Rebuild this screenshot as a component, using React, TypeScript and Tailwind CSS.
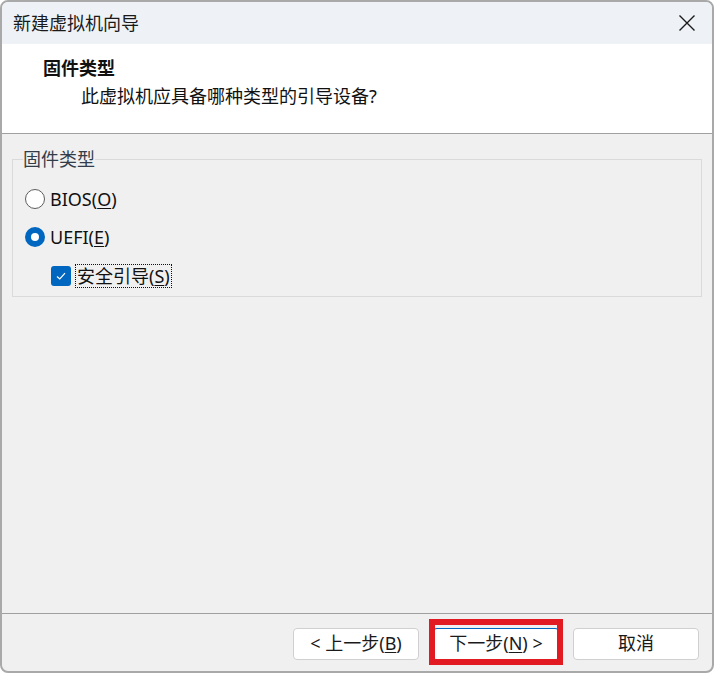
import React, { useState } from 'react';

const font = { fontFamily: '"Noto Sans", "Noto Sans CJK SC", sans-serif' };

const Radio = ({ checked, pre, hot, post, onClick }: { checked: boolean; pre: string; hot: string; post: string; onClick: () => void }) => (
  <button onClick={onClick} className="flex items-center gap-[5px] h-[24px] text-[18px] text-[#111]">
    {checked ? (
      <span className="w-[20px] h-[20px] rounded-full bg-[#0067c0] flex items-center justify-center">
        <span className="w-[8px] h-[8px] rounded-full bg-white" />
      </span>
    ) : (
      <span className="w-[20px] h-[20px] rounded-full border border-[#5d5d5d] bg-white" />
    )}
    <span>
      {pre}
      <span className="underline underline-offset-2">{hot}</span>
      {post}
    </span>
  </button>
);

const Btn = ({ children, def }: { children: React.ReactNode; def?: boolean }) => (
  <button
    className={`w-[126px] h-[32px] rounded-[4px] bg-white border text-[18px] text-[#1a1a1a] flex items-center justify-center ${
      def ? 'border-[#d0d0d0] border-t-[#0067c0]' : 'border-[#d0d0d0]'
    }`}
  >
    {children}
  </button>
);

export default function App() {
  const [fw, setFw] = useState<'bios' | 'uefi'>('uefi');
  const [secure, setSecure] = useState(true);

  return (
    <div className="w-[714px] h-[673px] bg-white" style={font}>
      <div className="w-full h-full rounded-[8px] border-2 border-[#a9a9a9] overflow-hidden flex flex-col bg-[#f0f0f0]">
        {/* title bar */}
        <div className="h-[42px] bg-[#eef2f6] flex items-center justify-between pl-[11px] pr-[14px]">
          <span className="text-[18px] text-[#1a1a1a]">新建虚拟机向导</span>
          <svg width="18" height="18" viewBox="0 0 18 18" className="mr-[2px]">
            <path d="M1.5 1.5 L16.5 16.5 M16.5 1.5 L1.5 16.5" stroke="#1a1a1a" strokeWidth="1.4" />
          </svg>
        </div>

        {/* header */}
        <div className="h-[90px] bg-white border-b border-[#a0a0a0] pl-[41px] pt-[11px]">
          <div className="text-[18px] font-bold text-[#111] leading-[26px]">固件类型</div>
          <div className="text-[18px] text-[#111] leading-[26px] pl-[38px] mt-[2px]">此虚拟机应具备哪种类型的引导设备?</div>
        </div>

        {/* body */}
        <div className="flex-1 px-[10px] pt-[13px]">
          <fieldset className="border border-[#dadada] h-[151px] pl-[12px] pr-0 pt-[14px] -mt-[1px]">
            <legend className="text-[18px] text-[#333d4a] ml-[-2px]">固件类型</legend>
            <div className="flex flex-col gap-[14px]">
              <Radio checked={fw === 'bios'} pre="BIOS(" hot="O" post=")" onClick={() => setFw('bios')} />
              <Radio checked={fw === 'uefi'} pre="UEFI(" hot="E" post=")" onClick={() => setFw('uefi')} />
            </div>
            <button onClick={() => setSecure(!secure)} className="flex items-center gap-[4px] pl-[26px] mt-[15px]">
              <span className={`w-[20px] h-[20px] rounded-[3px] flex items-center justify-center ${secure ? 'bg-[#0067c0]' : 'bg-white border border-[#5d5d5d]'}`}>
                {secure && (
                  <svg width="12" height="12" viewBox="0 0 12 12">
                    <path d="M2 6.5 L4.8 9 L10 3.2" stroke="white" strokeWidth="1.2" fill="none" />
                  </svg>
                )}
              </span>
              <span className="border border-dotted border-[#111] px-[1px] h-[24px] flex items-center text-[18px] text-[#111]">
                安全引导(<span className="underline underline-offset-2">S</span>)
              </span>
            </button>
          </fieldset>
        </div>

        {/* footer */}
        <div className="h-[58px] border-t border-[#a0a0a0] flex items-center justify-end gap-[14px] pr-[13px] pt-[2px] relative">
          <Btn>&lt; 上一步(<span className="underline underline-offset-2">B</span>)</Btn>
          <Btn def>
            下一步(<span className="underline underline-offset-2">N</span>) &gt;
          </Btn>
          <Btn>取消</Btn>
          <div className="absolute left-[427px] top-[5px] w-[134px] h-[46px] border-[6px] border-[#e21a22] pointer-events-none" />
        </div>
      </div>
    </div>
  );
}
